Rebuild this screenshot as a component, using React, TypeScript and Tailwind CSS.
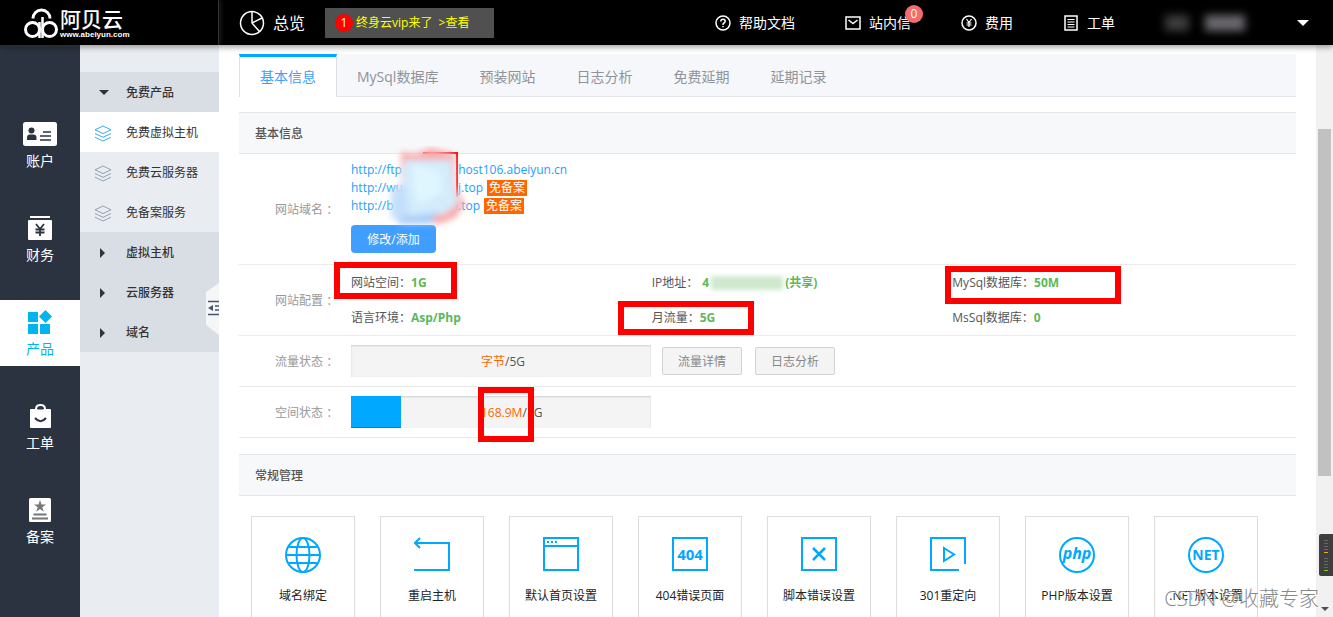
import type { ReactNode } from "react";

const sideItems = [
  { label: "账户", icon: <AccountIcon /> },
  { label: "财务", icon: <FinanceIcon /> },
  { label: "产品", icon: <ProductIcon />, active: true },
  { label: "工单", icon: <TicketIcon /> },
  { label: "备案", icon: <RecordIcon /> },
];

const freeProducts = [
  { label: "免费虚拟主机", active: true },
  { label: "免费云服务器" },
  { label: "免备案服务" },
];

const groups = ["虚拟主机", "云服务器", "域名"];

const tabs = ["基本信息", "MySql数据库", "预装网站", "日志分析", "免费延期", "延期记录"];

const tools = [
  { label: "域名绑定", icon: <GlobeIcon /> },
  { label: "重启主机", icon: <RestartIcon /> },
  { label: "默认首页设置", icon: <WindowIcon /> },
  { label: "404错误页面", icon: <NotFoundIcon /> },
  { label: "脚本错误设置", icon: <ScriptErrorIcon /> },
  { label: "301重定向", icon: <RedirectIcon /> },
  { label: "PHP版本设置", icon: <PhpIcon /> },
  { label: ".NET版本设置", icon: <NetIcon /> },
];

function AccountIcon() {
  return (
    <svg width="34" height="24" viewBox="0 0 34 24">
      <rect width="34" height="24" rx="2.5" fill="#fff" />
      <circle cx="8.5" cy="8.5" r="3" fill="#2a333f" />
      <path d="M4 18v-2.200q0-3.300 3-3.300h3.200q3.300 0 3.300 3.300V18z" fill="#2a333f" />
      <path d="M20 10h8M17 14h11M17 18h11" stroke="#2a333f" strokeWidth="1.600" />
    </svg>
  );
}

function FinanceIcon() {
  return (
    <svg width="24" height="24" viewBox="0 0 24 24">
      <path d="M2 1h20" stroke="#fff" strokeWidth="2" />
      <rect y="4" width="24" height="20" rx="1" fill="#fff" />
      <path d="M8 8l4 5 4-5M12 13v7M7.500 13.500h9M7.500 16.500h9" stroke="#2a333f" strokeWidth="1.800" fill="none" />
    </svg>
  );
}

function ProductIcon() {
  return (
    <svg width="24" height="24" viewBox="0 0 24 24" fill="#00b4f0">
      <rect y="2" width="10" height="10" rx=".6" />
      <rect y="14" width="10" height="10" rx=".6" />
      <rect x="12" y="14" width="10" height="10" rx=".6" />
      <path d="M17.500 0L24 6.500 17.500 13 11 6.500z" />
    </svg>
  );
}

function TicketIcon() {
  return (
    <svg width="24" height="24" viewBox="0 0 24 24">
      <path d="M8 7V5q0-4 4.500-4T17 5v2" stroke="#fff" strokeWidth="2" fill="none" />
      <rect x="2" y="5" width="21" height="19" rx="1" fill="#fff" />
      <path d="M9.500 5.500q.5-2 3-2t3 2z" fill="#2a333f" />
      <path d="M7 14q5.500 6.500 11 0" stroke="#2a333f" strokeWidth="2" fill="none" />
    </svg>
  );
}

function RecordIcon() {
  return (
    <svg width="24" height="24" viewBox="0 0 24 24">
      <rect x="1" width="22" height="24" rx="1.500" fill="#fff" />
      <path
        d="M12 2l1.500 4.500H18l-3.700 2.700 1.500 4.500L12 11l-3.800 2.700 1.500-4.500L6 6.500h4.500z"
        fill="#777"
      />
      <path d="M5.500 16.500h13M4 20.500h16" stroke="#777" strokeWidth="1.800" />
    </svg>
  );
}

function LayersIcon({ active }: { active?: boolean }) {
  return (
    <svg width="18" height="17" viewBox="0 0 18 17" fill="none" stroke={active ? "#3da9f0" : "#93a1b3"}>
      <path d="M9 1l8 3.800-8 3.800-8-3.800zM1 8.500l8 3.800 8-3.800M1 12.200L9 16l8-3.800" />
    </svg>
  );
}

function Tool({ children }: { children: ReactNode }) {
  return (
    <svg width="36" height="36" viewBox="0 0 36 36" fill="none" stroke="#00a8ff" strokeWidth="2">
      {children}
    </svg>
  );
}

function GlobeIcon() {
  return (
    <Tool>
      <circle cx="18" cy="18" r="17" />
      <ellipse cx="18" cy="18" rx="6.500" ry="17" />
      <path d="M1 18h34M3.500 10h29M3.500 26h29" />
    </Tool>
  );
}

function RestartIcon() {
  return (
    <Tool>
      <path d="M0 33h35V6H2M6 1L1 6l5 5" />
    </Tool>
  );
}

function WindowIcon() {
  return (
    <Tool>
      <path d="M1 1h34v32H1zM1 9h34" />
      <path d="M4 5h10" strokeDasharray="2 2" />
    </Tool>
  );
}

function NotFoundIcon() {
  return (
    <Tool>
      <path d="M1 1h34v32H1z" />
      <text x="18" y="22.500" textAnchor="middle" fontSize="15" fontWeight="700" fill="#00a8ff" stroke="none">
        404
      </text>
    </Tool>
  );
}

function ScriptErrorIcon() {
  return (
    <Tool>
      <path d="M1 1h34v32H1z" />
      <path d="M12 11l12 12M24 11L12 23" strokeWidth="2.500" />
    </Tool>
  );
}

function RedirectIcon() {
  return (
    <Tool>
      <path d="M29 33H1V1h34v26" />
      <path d="M14 11v13l10-6.500z" />
    </Tool>
  );
}

function PhpIcon() {
  return (
    <Tool>
      <circle cx="18" cy="18" r="17" />
      <text x="18" y="22" textAnchor="middle" fontSize="16" fontWeight="700" fontStyle="italic" fill="#00a8ff" stroke="none">
        php
      </text>
    </Tool>
  );
}

function NetIcon() {
  return (
    <Tool>
      <circle cx="18" cy="18" r="17" />
      <text x="18" y="23" textAnchor="middle" fontSize="14" fontWeight="700" fill="#00a8ff" stroke="none">
        NET
      </text>
    </Tool>
  );
}

function TopLink({ label, badge, children }: { label: string; badge?: string; children: ReactNode }) {
  return (
    <a href="#" className="relative flex items-center gap-2 text-sm text-white">
      <svg width="16" height="16" viewBox="0 0 16 16" fill="none" stroke="#fff" strokeWidth="1.500">
        {children}
      </svg>
      {label}
      {badge && (
        <span className="absolute -top-2 -right-3 flex size-[18px] items-center justify-center rounded-full bg-[#f56c6c] text-xs">
          {badge}
        </span>
      )}
    </a>
  );
}

function Header() {
  return (
    <header className="relative z-20 flex h-[45px] shrink-0 items-center bg-black pr-6 shadow-[0_2px_6px_rgba(0,0,0,0.4)]">
      <a
        href="#"
        className="flex h-full w-[219px] shrink-0 items-center gap-0.5 border-r border-[#333] pl-6 text-white shadow-[2px_0_4px_rgba(255,255,255,0.1)]"
      >
        <svg width="34" height="34" viewBox="0 0 34 34" fill="none" stroke="#fff" strokeWidth="3">
          <circle cx="8.500" cy="23.500" r="7" />
          <circle cx="25.500" cy="23.500" r="7" />
          <path d="M15.500 16v16M18.500 11v21" strokeWidth="2.500" />
          <path d="M9 12.500a8.500 8.500 0 0 1 17 0" />
        </svg>
        <span className="flex flex-col">
          <span className="text-[21px] leading-6 font-medium">阿贝云</span>
          <span className="font-['Liberation_Sans',sans-serif] text-[8px] leading-2 font-bold">www.abeiyun.com</span>
        </span>
      </a>

      <a href="#" className="ml-5 flex items-center gap-2 text-base text-white">
        <svg width="26" height="26" viewBox="0 0 26 26" fill="none" stroke="#fff" strokeWidth="1.500">
          <circle cx="13" cy="13" r="11.500" />
          <path d="M13 1.500V13l7.500 8.500M13 13l10-5" />
        </svg>
        总览
      </a>

      <a href="#" className="ml-5 flex h-[30px] w-[169px] items-center bg-[#505050] pl-2.5 text-xs text-[#ff0]">
        <span className="mr-[3px] flex size-[18px] items-center justify-center rounded-full bg-[#f00] text-white">1</span>
        终身云vip来了&nbsp; &gt;查看
      </a>

      <nav className="ml-auto flex items-center gap-[50px]">
        <TopLink label="帮助文档">
          <circle cx="8" cy="8" r="7" />
          <path d="M5.800 6.500q0-2.200 2.200-2.200t2.200 2q0 1-1.200 1.700T8 10M8 11v1.300" />
        </TopLink>
        <TopLink label="站内信" badge="0">
          <path d="M1 2h14v12H1zM3.500 5L8 8.500 12.500 5" />
        </TopLink>
        <TopLink label="费用">
          <circle cx="8" cy="8" r="7" />
          <path d="M5.500 4L8 7.500 10.500 4M8 7.500V12M5.500 8h5M5.500 10h5" strokeWidth="1.200" />
        </TopLink>
        <TopLink label="工单">
          <path d="M2 1h12v14H2z" />
          <path d="M4.500 4.500h7M4.500 7h7M4.500 9.500h7M4.500 12h7" strokeWidth="1" />
        </TopLink>
        <button type="button" aria-label="用户" className="flex w-36 items-center">
          <span className="h-4 w-6 bg-[#3c3c3c] blur-xs" />
          <span className="ml-4 h-4 w-10 bg-[#6a676e] blur-xs" />
          <svg className="ml-auto" width="12" height="6" viewBox="0 0 12 6" fill="#fff">
            <path d="M0 0h12L6 6z" />
          </svg>
        </button>
      </nav>
    </header>
  );
}

function SideNav() {
  return (
    <nav className="flex w-20 shrink-0 flex-col gap-7 bg-[#2a333f] pt-[67px]">
      {sideItems.map(({ label, icon, active }) => (
        <a
          key={label}
          href="#"
          className={`flex h-[66px] shrink-0 flex-col items-center gap-1 pt-2.5 text-sm leading-[22px] ${
            active ? "bg-white text-[#00b4f0]" : "text-white"
          }`}
        >
          {icon}
          {label}
        </a>
      ))}
    </nav>
  );
}

function SubNav() {
  return (
    <nav className="relative flex w-[139px] shrink-0 flex-col bg-[#e9ecf1] pt-[27px] text-xs text-[#333]">
      <a href="#" className="flex h-10 shrink-0 items-center bg-[#d9dde4] pt-0.5 font-medium">
        <svg className="mr-4 ml-[18px]" width="12" height="6" viewBox="0 0 12 6" fill="#333">
          <path d="M1 0h10L6 5z" />
        </svg>
        免费产品
      </a>
      {freeProducts.map(({ label, active }) => (
        <a
          key={label}
          href="#"
          className={`flex h-10 shrink-0 items-center gap-3.5 pt-0.5 pl-3.5 ${active ? "bg-white" : ""}`}
        >
          <LayersIcon active={active} />
          {label}
        </a>
      ))}
      {groups.map((label) => (
        <a key={label} href="#" className="flex h-10 shrink-0 items-center bg-[#d9dde4] pt-0.5 font-medium">
          <svg className="mr-4 ml-[18px]" width="12" height="10" viewBox="0 0 12 10" fill="#333">
            <path d="M2 0l5 5-5 5z" />
          </svg>
          {label}
        </a>
      ))}
      <button type="button" aria-label="收起" className="absolute top-[238px] right-0">
        <svg width="13" height="52" viewBox="0 0 13 52">
          <path d="M0 9L13 0v52L0 42z" fill="#f5f6f7" />
          <path d="M2 18.500h11M2 31.500h11M9 23h4M9 27h4" stroke="#4a5568" strokeWidth="1.600" />
          <path d="M2 25l5-3v6z" fill="#4a5568" />
        </svg>
      </button>
    </nav>
  );
}

function SectionTitle({ children }: { children: ReactNode }) {
  return (
    <h2 className="flex h-[42px] items-center border-y border-[#e4e6e9] bg-[#f7f8fa] pt-0.5 pl-4 text-xs font-medium text-[#555]">
      {children}
    </h2>
  );
}

function Row({ label, children }: { label: string; children: ReactNode }) {
  return (
    <div className="flex items-center border-b border-[#ebebeb]">
      <div className="w-28 shrink-0 pt-0.5 pl-9 text-[#999]">{label} ：</div>
      <div className="min-w-0 flex-1">{children}</div>
    </div>
  );
}

function Domain({ start, end, exempt }: { start: string; end: string; exempt?: boolean }) {
  return (
    <div className="flex h-[18px] items-center">
      <a href="#" className="flex text-[#1a9fff]">
        <span className="w-26">{start}</span>
        {end}
      </a>
      {exempt && <span className="ml-1 bg-[#f60] px-0.5 leading-4 text-white">免备案</span>}
    </div>
  );
}

function Spec({ name, children }: { name: string; children: ReactNode }) {
  return (
    <div className="relative flex h-[35px] items-center text-[#555]">
      {name}：<span className="font-bold text-[#5cb85c]">{children}</span>
    </div>
  );
}

function Meter({ used, total, percent, children }: { used: string; total: string; percent: number; children?: ReactNode }) {
  return (
    <div className="relative flex h-8 w-[300px] items-center bg-[#f4f4f4] pt-0.5 pl-[130px] shadow-[inset_0_1px_2px_rgba(0,0,0,0.15)]">
      <div
        className="absolute inset-y-0 left-0 bg-[#00a8ff] shadow-[inset_0_-1px_0_rgba(0,0,0,0.2)]"
        style={{ width: `${percent}%` }}
      />
      <span className="text-[#f60]">{used}</span>/{total}
      {children}
    </div>
  );
}

function Mark({ className }: { className: string }) {
  return <span className={`pointer-events-none absolute border-6 border-[#f00] ${className}`} />;
}

function BasicInfo() {
  return (
    <section className="mt-[15px] text-xs text-[#555]">
      <SectionTitle>基本信息</SectionTitle>
      <Row label="网站域名">
        <div className="relative pt-[7px] pb-[11px]">
          <Domain start="http://ftp" end=".host106.abeiyun.cn" />
          <Domain start="http://wu" end="ij.top" exempt />
          <Domain start="http://b" end="i.top" exempt />
          <button type="button" className="mt-2.5 h-7 w-[85px] rounded-sm bg-[#409eff] pt-0.5 text-white">
            修改/添加
          </button>
          <svg className="pointer-events-none absolute -top-2 left-8" width="90" height="88" viewBox="0 0 90 88">
            <defs>
              <filter id="smudge" x="-20%" y="-20%" width="140%" height="140%">
                <feGaussianBlur stdDeviation="3" />
              </filter>
            </defs>
            <path d="M40 7h34v44" fill="none" stroke="#f00" strokeWidth="2" />
            <g filter="url(#smudge)">
              <path d="M18 6l14 2 16-6 24 6 1 34 9 16-10 14-16 6-36-8-6-18 4-16z" fill="#f9a9a9" />
              <path d="M21 14h48l2 28 5 14-14 12-34 2-12-10z" fill="#d3ecfc" />
              <path d="M8 44l14-6 6 36-20-2z" fill="#c3dffb" />
              <path d="M14 72l40-6-6 12-32 0z" fill="#a9cdf8" />
              <path d="M30 18l26 8 4 20-24 12-6-16z" fill="#dff6ff" />
            </g>
          </svg>
        </div>
      </Row>
      <Row label="网站配置">
        <div className="mr-[43px] grid grid-cols-3">
          <Spec name="网站空间">
            1G
            <Mark className="-top-[3px] -left-[17px] h-[37px] w-[123px]" />
          </Spec>
          <Spec name="IP地址">
            <span className="flex items-center pl-1">
              4
              <span className="mx-0.5 h-3.5 w-[72px] bg-[#cfe9cf] blur-[2px]" />
              <span>(共享)</span>
            </span>
          </Spec>
          <Spec name="MySql数据库">
            50M
            <Mark className="top-px -left-[7px] h-[38px] w-44" />
          </Spec>
          <Spec name="语言环境">Asp/Php</Spec>
          <Spec name="月流量">
            5G
            <Mark className="top-px -left-[34px] h-[34px] w-34" />
          </Spec>
          <Spec name="MsSql数据库">0</Spec>
        </div>
      </Row>
      <Row label="流量状态">
        <div className="flex h-[50px] items-center">
          <Meter used="字节" total="5G" percent={0} />
          <button type="button" className="ml-[11px] h-7 w-20 rounded-xs border border-[#d3d3d3] bg-[#f4f4f4] pt-0.5 text-[#888]">
            流量详情
          </button>
          <button type="button" className="ml-[13px] h-7 w-20 rounded-xs border border-[#d3d3d3] bg-[#f4f4f4] pt-0.5 text-[#888]">
            日志分析
          </button>
        </div>
      </Row>
      <Row label="空间状态">
        <div className="flex h-[50px] items-center">
          <Meter used="168.9M" total="1G" percent={16.7}>
            <Mark className="-top-[9px] left-[127px] h-[55px] w-14" />
          </Meter>
        </div>
      </Row>
    </section>
  );
}

export default function App() {
  return (
    <div className="relative flex h-screen flex-col overflow-hidden bg-white font-['Open_Sans','Noto_Sans_CJK_SC',sans-serif]">
      <Header />
      <div className="flex min-h-0 flex-1">
        <SideNav />
        <SubNav />
        <main className="min-w-0 flex-1 overflow-hidden px-5 pt-[9px]">
          <div role="tablist" className="flex h-[43px] border-b border-[#e4e7ed] bg-[#f5f7fa] text-sm text-[#909399]">
            {tabs.map((tab, i) => (
              <button
                key={tab}
                type="button"
                role="tab"
                aria-selected={i === 0}
                className={
                  i === 0
                    ? "-mb-px border-x border-t-3 border-x-[#dcdfe6] border-t-[#00a8ff] bg-white px-5 text-[#409eff]"
                    : "border-r border-transparent px-5 pt-[3px]"
                }
              >
                {tab}
              </button>
            ))}
          </div>
          <BasicInfo />
          <section className="mt-4">
            <SectionTitle>常规管理</SectionTitle>
            <div className="flex gap-[25px] px-3 pt-5">
              {tools.map(({ label, icon }) => (
                <a
                  key={label}
                  href="#"
                  className="flex h-30 w-26 shrink-0 flex-col items-center border border-[#ddd] pt-5 text-xs text-[#222]"
                >
                  {icon}
                  <span className="mt-[15px] whitespace-nowrap">{label}</span>
                </a>
              ))}
            </div>
          </section>
        </main>
        <div className="flex w-[17px] shrink-0 flex-col items-center justify-between bg-[#f1f1f1] pt-21 pb-1.5">
          <div className="h-[347px] w-[13px] bg-[#c1c1c1]" />
          <svg width="8" height="4" viewBox="0 0 8 4" fill="#505050">
            <path d="M0 0h8L4 4z" />
          </svg>
        </div>
      </div>
      <div className="absolute right-0 bottom-[41px] z-30">
        <svg width="14" height="42" viewBox="0 0 14 42">
          <rect width="18" height="42" rx="2" fill="#3f3f3f" />
          <path d="M5 6.500h4M5 9.500h4M5 12.500h4M5 15.500h4M5 24.500h4M5 27.500h4M5 30.500h4M5 33.500h4" stroke="#666" />
          <path d="M5 18.500h4" stroke="#f5a623" />
          <path d="M5 36.500h4" stroke="#7ed321" />
        </svg>
      </div>
      <div className="pointer-events-none absolute right-3.5 bottom-1 z-30 text-xl leading-7 font-light text-[#888] [text-shadow:1px_1px_0_#fff]">
        CSDN @收藏专家
      </div>
    </div>
  );
}
